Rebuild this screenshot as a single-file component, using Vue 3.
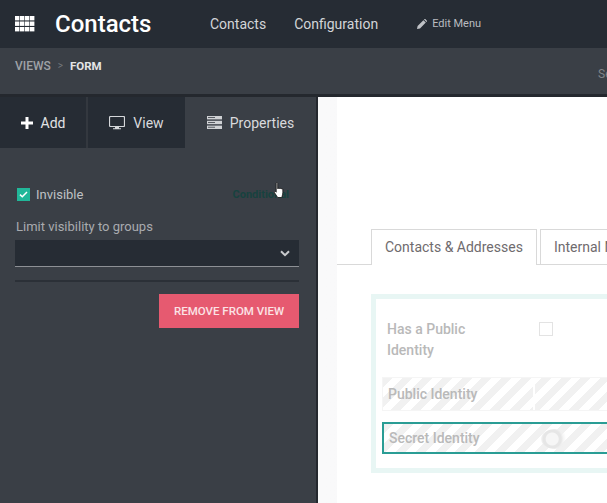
<script setup>
const tabs = [
  { id: 'add', label: 'Add' },
  { id: 'view', label: 'View' },
  { id: 'props', label: 'Properties' },
]
</script>

<template>
  <div class="app">
    <header class="topbar">
      <svg class="apps" width="20" height="16" viewBox="0 0 20 16" fill="#fff">
        <g v-for="r in 3" :key="r">
          <rect v-for="c in 4" :key="c" :x="(c - 1) * 5" :y="(r - 1) * 5.5" width="4.4" height="4.4" />
        </g>
      </svg>
      <span class="brand">Contacts</span>
      <nav class="menu">
        <a>Contacts</a>
        <a>Configuration</a>
      </nav>
      <span class="edit">
        <svg width="10" height="10" viewBox="0 0 10 10" fill="#bfc2c6"><path d="M0 10l.6-3L6.4 1.2l2.4 2.4L3 9.4zM7 .6l.5-.5a.6.6 0 0 1 .8 0l1.6 1.6a.6.6 0 0 1 0 .8l-.5.5z"/></svg>
        Edit Menu
      </span>
    </header>

    <div class="subbar">
      <div class="crumbs"><span>VIEWS</span><i>&gt;</i><b>FORM</b></div>
      <span class="search">Search</span>
    </div>

    <div class="body">
      <aside class="side">
        <div class="tabs">
          <div v-for="t in tabs" :key="t.id" class="tab" :class="t.id">
            <svg v-if="t.id === 'add'" width="12" height="12" viewBox="0 0 12 12" fill="#fff"><path d="M4.5 0h3v4.5H12v3H7.5V12h-3V7.5H0v-3h4.5z"/></svg>
            <svg v-else-if="t.id === 'view'" width="16" height="14" viewBox="0 0 16 14"><path d="M1.5.5h13a1 1 0 0 1 1 1v8a1 1 0 0 1-1 1h-13a1 1 0 0 1-1-1v-8a1 1 0 0 1 1-1z" fill="none" stroke="#d5d7da" stroke-width="1.2"/><path d="M6 11h4v1.2h2V13.2H4V12.2h2z" fill="#d5d7da"/></svg>
            <svg v-else width="15" height="13" viewBox="0 0 15 13" fill="#cfd1d4"><rect width="15" height="3.4"/><rect y="4.8" width="15" height="3.4"/><rect y="9.6" width="15" height="3.4"/><g fill="#3a3f46"><rect x="1" y="1.2" width="7" height=".8"/><rect x="1" y="6" width="7" height=".8"/><rect x="1" y="10.8" width="7" height=".8"/></g></svg>
            <span>{{ t.label }}</span>
          </div>
        </div>

        <div class="panel">
          <div class="inv-row">
            <label class="inv">
              <span class="check">
                <svg width="9" height="7" viewBox="0 0 9 7"><path d="M1 3.6l2.3 2.2L8 1" fill="none" stroke="#fff" stroke-width="1.5"/></svg>
              </span>
              Invisible
            </label>
            <span class="cond">Conditional
              <svg class="hand" width="12" height="18" viewBox="0 0 12 18"><path d="M3.2 1.2c0-.9 1.5-.9 1.5 0v5.6c.3-.8 1.5-.8 1.7 0 .3-.7 1.5-.7 1.7.2.4-.6 1.6-.4 1.7.5.1 1.700.2 3.600-.3 5.300l-.7 2.700H4.700L1.500 10.700C1 9.800 1.800 8.900 2.600 9.500l.6.700z" fill="#fff" stroke="#111" stroke-width=".8"/></svg>
            </span>
          </div>
          <div class="lim">Limit visibility to groups</div>
          <div class="select">
            <svg width="10" height="7" viewBox="0 0 10 7"><path d="M1 1.200l4 4 4-4" fill="none" stroke="#c8cacd" stroke-width="2"/></svg>
          </div>
          <div class="rule"></div>
          <div class="actions"><button class="remove">REMOVE FROM VIEW</button></div>
        </div>
      </aside>

      <main class="canvas">
        <div class="sheet">
          <div class="nb">
            <div class="nb-tab active">Contacts &amp; Addresses</div>
            <div class="nb-tab">Internal Notes</div>
          </div>
          <div class="group">
            <div class="row first">
              <div class="lab">Has a Public<br />Identity</div>
              <div class="val"><span class="box"></span></div>
            </div>
            <div class="row striped">
              <div class="lab">Public Identity</div>
              <div class="val"></div>
            </div>
            <div class="row striped selected">
              <div class="lab">Secret Identity</div>
              <div class="val"><span class="ghost"></span></div>
            </div>
          </div>
        </div>
      </main>
    </div>
  </div>
</template>

<style>
html, body { margin: 0; overflow: hidden; }
</style>

<style scoped>
.app { width: 607px; height: 503px; overflow: hidden; display: flex; flex-direction: column; font-family: Roboto, "Liberation Sans", sans-serif; background: #fff; }
.topbar { height: 48px; flex: none; box-sizing: border-box; background: #262c34; display: flex; align-items: center; padding-left: 15px; color: #fff; }
.apps { flex: none; margin-top: -1px; }
.brand { font-size: 24px; font-weight: 500; margin-left: 20px; width: 155px; color: #fff; margin-top: -1px; }
.menu { display: flex; gap: 28px; font-size: 14px; color: #d3d5d8; margin-top: -1px; }
.edit { margin-left: 39px; font-size: 11px; color: #b9bcc0; display: flex; align-items: center; gap: 5px; margin-top: -1px; }
.subbar { height: 46px; flex: none; background: #3a3f46; position: relative; display: flex; justify-content: space-between; padding: 0 0 0 15px; border-bottom: 3px solid #24282e; }
.crumbs { font-size: 12px; font-weight: 500; color: #9fa2a6; display: flex; gap: 6px; padding-top: 11px; height: 14px; line-height: 14px; }
.crumbs i { font-style: normal; font-size: 10px; color: #74787d; font-weight: 400; padding: 0 1px; }
.crumbs b { color: #e4e5e7; font-weight: 700; font-size: 11.500px; }
.search { font-size: 12px; color: #80848a; margin-right: -31px; padding-top: 19px; line-height: 14px; width: 40px; }
.body { flex: 1; display: flex; min-height: 0; background: linear-gradient(90deg, #fbfbfc 0, #f8f8f9 80%, #dcdcde 100%); }
.side { width: 318px; flex: none; box-sizing: border-box; background: #3a3f46; border-right: 2px solid #24282e; color: #c9cbce; }
.tabs { display: flex; height: 51px; }
.tab { display: flex; align-items: center; justify-content: center; gap: 8px; background: #262c34; font-size: 14px; color: #d9dadd; box-sizing: border-box; }
.tab.add { width: 88px; border-right: 2px solid #33383f; color: #e2e3e5; }
.tab.view { width: 97px; }
.tab.props { flex: 1; background: #3a3f46; }
.panel { padding: 37px 17px 0 15px; }
.inv-row { display: flex; align-items: center; justify-content: space-between; height: 18px; padding-left: 2px; }
.inv { display: flex; align-items: center; gap: 6px; font-size: 13px; color: #bfc1c4; }
.check { width: 13px; height: 13px; background: #21b799; display: flex; align-items: center; justify-content: center; }
.cond { position: relative; font-size: 11px; font-weight: 700; color: #17423f; margin-right: 10px; }
.hand { position: absolute; left: 40px; top: -6px; }
.lim { font-size: 13px; color: #a9abaf; margin-top: 15px; padding-left: 1px; line-height: 17px; }
.select { height: 26px; margin-top: 5px; background: #262c34; border-bottom: 1px solid #8d9095; display: flex; align-items: center; justify-content: flex-end; padding-right: 9px; }
.rule { height: 2px; background: #2b3037; margin-top: 13px; }
.actions { display: flex; justify-content: flex-end; margin-top: 12px; }
.remove { width: 140px; height: 34px; border: 0; background: #e65a70; color: #fbe3e6; font: 500 11.500px Roboto, sans-serif; padding: 0; }
.canvas { flex: 1; min-width: 0; padding-left: 19px; }
.sheet { height: 100%; background: #fff; padding-top: 132px; box-sizing: border-box; }
.nb { display: flex; gap: 3px; padding-left: 34px; height: 35px; border-bottom: 1px solid #d9d9d9; box-sizing: content-box; }
.nb-tab { height: 35px; box-sizing: border-box; border: 1px solid #d9d9d9; border-bottom: 0; padding: 0 13px; font-size: 14px; line-height: 34px; color: #6f6b6e; white-space: nowrap; background: #fff; }
.nb-tab.active { height: 36px; }
.group { margin: 29px 0 0 34px; width: 300px; height: 179px; box-sizing: border-box; border: 5px solid #e8f6f4; border-right: 0; padding-top: 20px; padding-left: 6px; display: flex; flex-direction: column; }
.row { display: flex; font-size: 14px; font-weight: 500; color: #b9b9b9; }
.row.first { height: 40px; margin-top: 0; margin-bottom: 18px; }
.lab { width: 152px; flex: none; box-sizing: border-box; padding-left: 5px; line-height: 21px; }
.val { flex: 1; position: relative; }
.box { display: block; width: 12px; height: 12px; border: 1px solid #e3e3e3; margin: 3px 0 0 5px; }
.striped { background: repeating-linear-gradient(135deg, #f1f1f1 0 7px, #fff 7px 14px); }
.row.striped:not(.selected) { height: 34px; align-items: center; margin-bottom: 11px; border: 1px solid #f5f5f5; box-sizing: border-box; }
.row.striped:not(.selected) .lab { border-right: 2px solid #fff; line-height: 32px; height: 32px; }
.row.striped:not(.selected) .val { height: 32px; }
.selected { height: 32px; border: 2px solid #2a9d95; border-right: 0; box-sizing: border-box; align-items: center; }
.selected .lab { padding-left: 5px; width: 152px; line-height: 28px; }
.ghost { display: block; width: 28px; height: 20px; margin: 2px 0 0 5px; border-radius: 50%; background: radial-gradient(circle at 40% 50%, #f6f6f6 0 6px, #e6e6e6 7px 9px, rgba(240,240,240,.7) 11px, transparent 14px); }
</style>
